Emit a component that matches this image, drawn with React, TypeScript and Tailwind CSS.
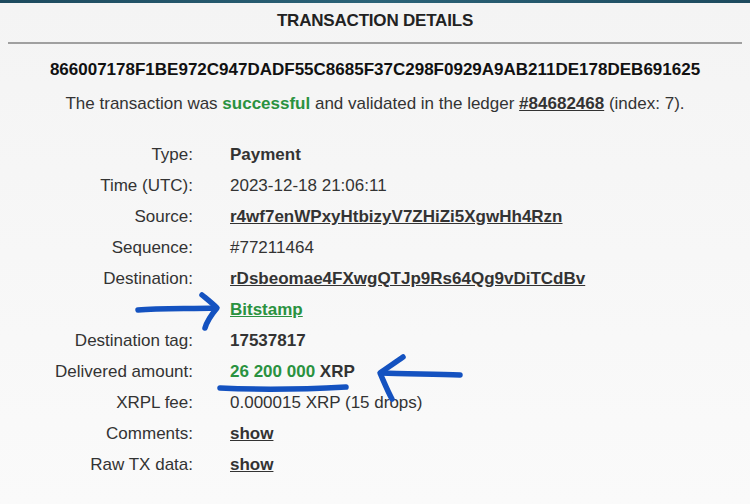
import React from "react";

const rows: { label: string; value: React.ReactNode }[] = [
  { label: "Type:", value: <span className="font-bold">Payment</span> },
  { label: "Time (UTC):", value: <span>2023-12-18 21:06:11</span> },
  { label: "Source:", value: <a className="font-bold underline">r4wf7enWPxyHtbizyV7ZHiZi5XgwHh4Rzn</a> },
  { label: "Sequence:", value: <span>#77211464</span> },
  { label: "Destination:", value: <a className="font-bold underline">rDsbeomae4FXwgQTJp9Rs64Qg9vDiTCdBv</a> },
  { label: "", value: <a className="font-bold underline text-[#2a9240]">Bitstamp</a> },
  { label: "Destination tag:", value: <span className="font-bold">17537817</span> },
  {
    label: "Delivered amount:",
    value: (
      <span className="font-bold">
        <span className="text-[#2a9240]">26 200 000</span> XRP
      </span>
    ),
  },
  { label: "XRPL fee:", value: <span>0.000015 XRP (15 drops)</span> },
  { label: "Comments:", value: <a className="font-bold underline">show</a> },
  { label: "Raw TX data:", value: <a className="font-bold underline">show</a> },
];

export default function App() {
  return (
    <div
      className="relative w-[750px] h-[504px] overflow-hidden bg-gradient-to-b from-[#f4f4f4] to-[#fafafa] text-[#333] text-[17px]"
      style={{ fontFamily: '"Liberation Sans", Arial, sans-serif' }}
    >
      <div className="h-[3px] bg-gradient-to-r from-[#1d4a5e] via-[#2b6378] to-[#1d4a5e]" />
      <div className="h-[36px] flex items-center justify-center font-bold text-[#222] tracking-[-0.2px]">
        TRANSACTION DETAILS
      </div>
      <div className="mx-[8px] h-[2px] bg-[#a0a0a0] mt-[3px]" />
      <div className="mt-[14px] text-center font-bold text-[#111] leading-[24px]">
        866007178F1BE972C947DADF55C8685F37C298F0929A9AB211DE178DEB691625
      </div>
      <div className="mt-[10px] text-center leading-[24px]">
        The transaction was <span className="font-bold text-[#2a9240]">successful</span> and validated in the
        ledger <a className="font-bold underline">#84682468</a> (index: 7).
      </div>
      <div className="mt-[23px] flex flex-col">
        {rows.map((r, i) => (
          <div key={i} className="flex h-[31px] items-center">
            <div className="w-[193px] text-right shrink-0">{r.label}</div>
            <div className="ml-[37px]">{r.value}</div>
          </div>
        ))}
      </div>
      <svg
        className="absolute left-0 top-0 pointer-events-none"
        width="750"
        height="504"
        viewBox="0 0 750 504"
        fill="none"
        stroke="#1452c0"
        strokeWidth="5.5"
        strokeLinecap="round"
        strokeLinejoin="round"
      >
        <path d="M138 310 C160 308 190 309 216 308" />
        <path d="M202 295 C208 300 213 304 217 308 C212 314 207 321 205 328" />
        <path d="M460 375 C435 374 405 374 381 373" />
        <path d="M403 357 C396 362 387 368 380 373 C384 382 388 392 392 399" />
        <path d="M220 388 C260 390 310 389 346 387" />
      </svg>
    </div>
  );
}
